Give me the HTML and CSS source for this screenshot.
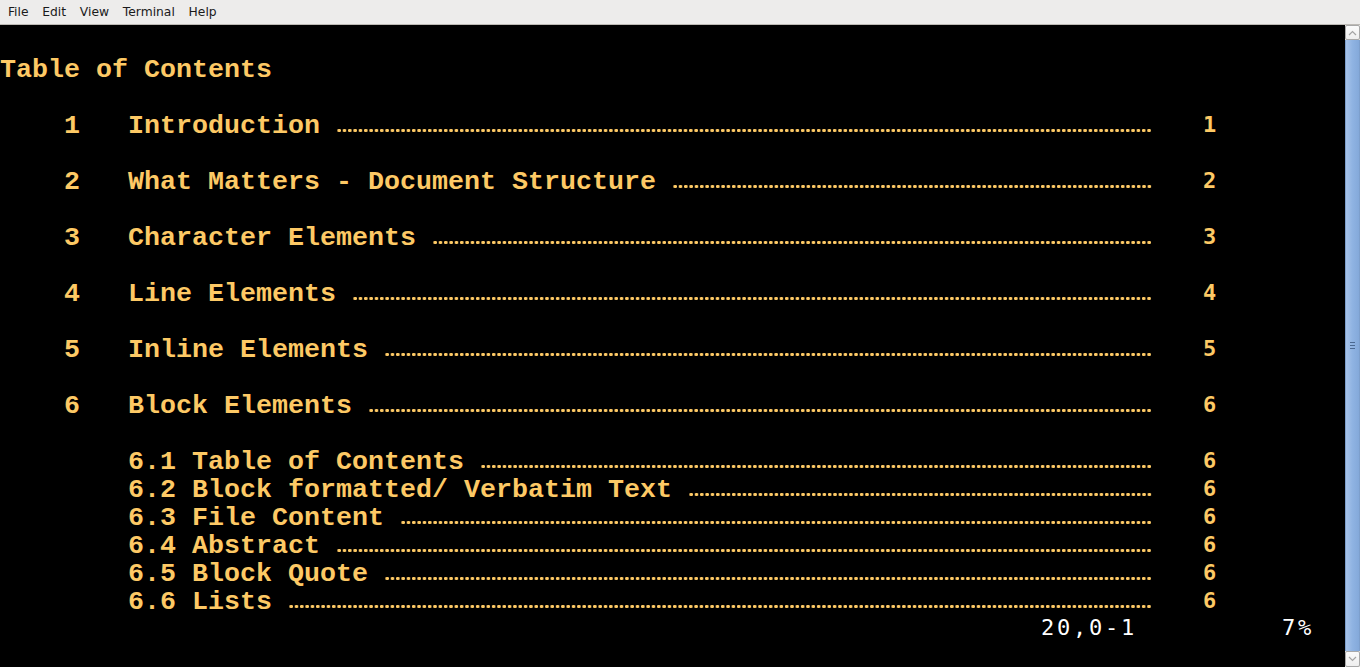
FILE: index.html
```html
<!DOCTYPE html>
<html>
<head>
<meta charset="utf-8">
<link rel="stylesheet" href="styles.css">
</head>
<body>
<div class="menubar">
  <span class="menu-item">File</span>
  <span class="menu-item">Edit</span>
  <span class="menu-item">View</span>
  <span class="menu-item">Terminal</span>
  <span class="menu-item">Help</span>
</div>
<div class="window">
  <div class="term">
    <div class="row"></div>
    <div class="row heading">Table of Contents</div>
    <div class="row"></div>
    <div class="row entry"><span class="num">1</span><span class="title">Introduction</span><span class="dots"></span><span class="page">1</span></div>
    <div class="row"></div>
    <div class="row entry"><span class="num">2</span><span class="title">What Matters - Document Structure</span><span class="dots"></span><span class="page">2</span></div>
    <div class="row"></div>
    <div class="row entry"><span class="num">3</span><span class="title">Character Elements</span><span class="dots"></span><span class="page">3</span></div>
    <div class="row"></div>
    <div class="row entry"><span class="num">4</span><span class="title">Line Elements</span><span class="dots"></span><span class="page">4</span></div>
    <div class="row"></div>
    <div class="row entry"><span class="num">5</span><span class="title">Inline Elements</span><span class="dots"></span><span class="page">5</span></div>
    <div class="row"></div>
    <div class="row entry"><span class="num">6</span><span class="title">Block Elements</span><span class="dots"></span><span class="page">6</span></div>
    <div class="row"></div>
    <div class="row entry sub"><span class="title">6.1 Table of Contents</span><span class="dots"></span><span class="page">6</span></div>
    <div class="row entry sub"><span class="title">6.2 Block formatted/ Verbatim Text</span><span class="dots"></span><span class="page">6</span></div>
    <div class="row entry sub"><span class="title">6.3 File Content</span><span class="dots"></span><span class="page">6</span></div>
    <div class="row entry sub"><span class="title">6.4 Abstract</span><span class="dots"></span><span class="page">6</span></div>
    <div class="row entry sub"><span class="title">6.5 Block Quote</span><span class="dots"></span><span class="page">6</span></div>
    <div class="row entry sub"><span class="title">6.6 Lists</span><span class="dots"></span><span class="page">6</span></div>
    <div class="row status"><span class="pos">20,0-1</span><span class="pct">7%</span></div>
  </div>
  <div class="scrollbar">
    <div class="sb-btn sb-up">
      <svg width="9" height="6" viewBox="0 0 9 6"><path d="M1 5 L4.5 1.5 L8 5" fill="none" stroke="#a4a4a4" stroke-width="1.2"/></svg>
    </div>
    <div class="sb-thumb">
      <div class="grip"><span></span><span></span><span></span></div>
    </div>
    <div class="sb-btn sb-down">
      <svg width="9" height="6" viewBox="0 0 9 6"><path d="M1 1 L4.5 4.5 L8 1" fill="none" stroke="#a4a4a4" stroke-width="1.2"/></svg>
    </div>
  </div>
</div>
</body>
</html>
```

FILE: styles.css
```css
html, body {
  margin: 0;
  padding: 0;
  height: 100%;
  background: #000;
  overflow: hidden;
}

.menubar {
  height: 24px;
  background: #edeceb;
  border-bottom: 1px solid #bdbab5;
  display: flex;
  align-items: center;
  padding-left: 1px;
  font-family: "DejaVu Sans", sans-serif;
  font-size: 12.3px;
  color: #1a1a1a;
}

.menu-item {
  padding: 0 6.9px;
}

.window {
  display: flex;
  height: 642px;
}

.term {
  flex: 1;
  background: #000;
  color: #fdc965;
  font-family: "Liberation Mono", "Courier New", monospace;
  font-weight: bold;
  font-size: 26.667px;
  padding-top: 3px;
  --c: 16px;
}

.row {
  height: 28px;
  line-height: 28px;
  white-space: pre;
  display: flex;
  width: calc(var(--c) * 84);
}

.num {
  margin-left: calc(var(--c) * 4);
  width: calc(var(--c) * 4);
}

.sub .title {
  margin-left: calc(var(--c) * 8);
}

.dots {
  flex: 1;
  margin-left: var(--c);
  margin-right: calc(var(--c) * 3);
  background-image: radial-gradient(circle, #fdc965 1.5px, rgba(253, 201, 101, 0) 2px);
  background-size: 5.3333px 5px;
  background-position: 0.5px 16px;
  background-repeat: repeat-x;
}

.page {
  width: calc(var(--c) * 9);
  font-family: "DejaVu Sans Mono", monospace;
  font-size: 22px;
  font-weight: bold;
  padding-left: 3px;
  box-sizing: border-box;
  line-height: 26px;
}

.status {
  color: #ffffff;
  font-family: "DejaVu Sans Mono", monospace;
  font-weight: normal;
  font-size: 22px;
  letter-spacing: 2.76px;
  line-height: 24px;
}

.pos {
  margin-left: calc(var(--c) * 65);
  width: calc(var(--c) * 15);
  padding-left: 1px;
}

.pct {
  padding-left: 1px;
}

.scrollbar {
  width: 15px;
  display: flex;
  flex-direction: column;
  background: #e6e4e1;
}

.sb-btn {
  height: 15px;
  background: linear-gradient(#fbfbfb, #eeeeee);
  border: 1px solid #a8a8a8;
  border-radius: 2px;
  display: flex;
  align-items: center;
  justify-content: center;
  box-sizing: border-box;
}

.sb-down {
  height: 16px;
}

.sb-thumb {
  flex: 1;
  background: linear-gradient(to right, #a7c4ea, #8fb3e2 50%, #84a9da);
  border-left: 1px solid #7d9fcc;
  border-right: 1px solid #7d9fcc;
  display: flex;
  align-items: center;
  justify-content: center;
}

.grip {
  display: flex;
  flex-direction: column;
  gap: 2px;
}

.grip span {
  display: block;
  width: 5px;
  height: 1px;
  background: #4b6890;
}
```
